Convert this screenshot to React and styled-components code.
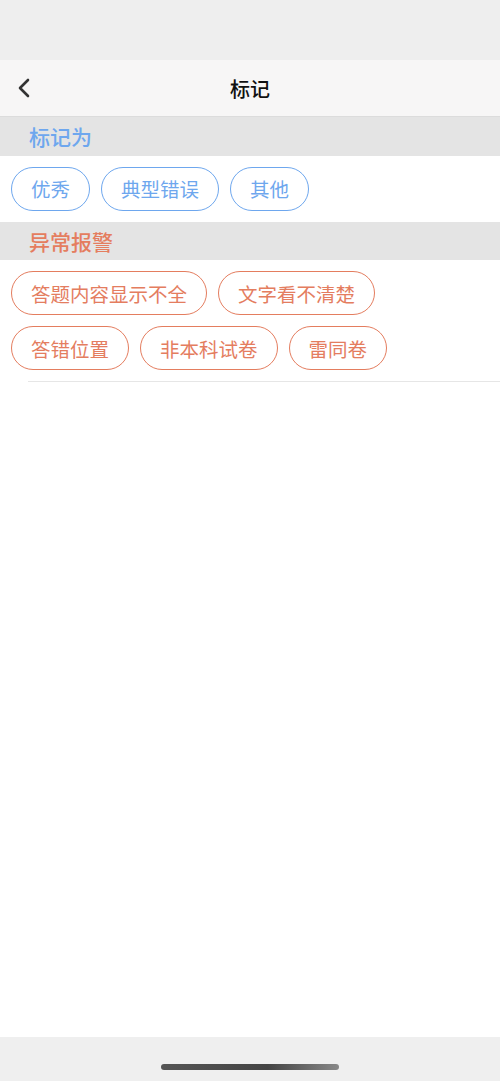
import React from 'react'
import styled, { createGlobalStyle } from 'styled-components'

const GlobalStyle = createGlobalStyle`
  html, body {
    margin: 0;
    padding: 0;
    background: #ffffff;
  }
  body {
    font-family: "Noto Sans CJK SC", "Noto Sans", sans-serif;
  }
`

const BLUE = '#6ea7ee'
const ORANGE = '#e47d5f'

const marks = ['优秀', '典型错误', '其他']
const alarms = ['答题内容显示不全', '文字看不清楚', '答错位置', '非本科试卷', '雷同卷']

export default function App() {
  return (
    <Screen>
      <GlobalStyle />
      <StatusArea />
      <NavBar>
        <BackButton aria-label="返回">
          <svg width="14" height="20" viewBox="0 0 14 20" fill="none">
            <path d="M11 2 L3 10 L11 18" stroke="#333" strokeWidth="2.6" strokeLinecap="round" strokeLinejoin="round" />
          </svg>
        </BackButton>
        <Title>标记</Title>
      </NavBar>

      <SectionHeader $color={BLUE}>标记为</SectionHeader>
      <ChipList>
        {marks.map((m) => (
          <Chip key={m} $color={BLUE}>{m}</Chip>
        ))}
      </ChipList>

      <SectionHeader $color={ORANGE}>异常报警</SectionHeader>
      <ChipList>
        {alarms.map((a) => (
          <Chip key={a} $color={ORANGE}>{a}</Chip>
        ))}
      </ChipList>
      <Divider />

      <Spacer />
      <BottomBar>
        <HomeIndicator />
      </BottomBar>
    </Screen>
  )
}

/* ------- STYLING ------- */

const Screen = styled.div`
  width: 500px;
  height: 1081px;
  display: flex;
  flex-direction: column;
  background: #ffffff;
  overflow: hidden;
`
const StatusArea = styled.div`
  height: 60px;
  background: #eeeeee;
  flex-shrink: 0;
`
const NavBar = styled.div`
  height: 56px;
  flex-shrink: 0;
  display: flex;
  align-items: center;
  justify-content: center;
  position: relative;
  background: #f7f6f6;
  border-bottom: 1px solid #dcdcdc;
`
const BackButton = styled.div`
  position: absolute;
  left: 17px;
  top: 50%;
  transform: translateY(-50%);
  display: flex;
  align-items: center;
`
const Title = styled.h1`
  margin: 0;
  font-size: 20px;
  font-weight: 500;
  color: #111111;
`
const SectionHeader = styled.div`
  height: 38.5px;
  flex-shrink: 0;
  display: flex;
  align-items: center;
  padding-left: 29px;
  background: #e4e4e4;
  color: ${(p) => p.$color};
  font-size: 21px;
  font-weight: 500;
`
const ChipList = styled.div`
  display: flex;
  flex-wrap: wrap;
  gap: 11px 11px;
  padding: 11px;
  background: #ffffff;
`
const Chip = styled.div`
  box-sizing: border-box;
  height: 44px;
  padding: 0 19px;
  display: flex;
  align-items: center;
  border: 1.5px solid ${(p) => p.$color};
  border-radius: 22px;
  color: ${(p) => p.$color};
  font-size: 19.5px;
  white-space: nowrap;
`
const Divider = styled.div`
  height: 1px;
  margin-left: 28px;
  background: #e6e6e6;
`
const Spacer = styled.div`
  flex: 1;
`
const BottomBar = styled.div`
  height: 44px;
  flex-shrink: 0;
  background: #efefef;
  display: flex;
  justify-content: center;
  align-items: flex-start;
  padding-top: 27px;
  box-sizing: border-box;
`
const HomeIndicator = styled.div`
  width: 178px;
  height: 6px;
  border-radius: 3px;
  background: linear-gradient(90deg, #555 0%, #444 60%, #888 100%);
`
